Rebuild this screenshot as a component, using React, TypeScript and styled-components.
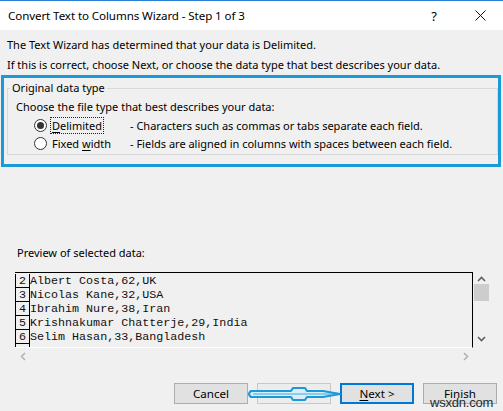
import React from "react";
import styled, { createGlobalStyle } from "styled-components";

const Global = createGlobalStyle`
  html, body { margin: 0; padding: 0; background: #f0f0f0; }
  body { font-family: "Segoe UI", "Noto Sans", "Liberation Sans", sans-serif; }
`;

const Window = styled.div`
  width: 503px;
  height: 411px;
  box-sizing: border-box;
  border-top: 1px solid #2b7fd6;
  background: #f0f0f0;
  display: flex;
  flex-direction: column;
  font-size: 11px;
  color: #000;
  overflow: hidden;
`;

const TitleBar = styled.div`
  height: 29px;
  flex: none;
  background: #fff;
  display: flex;
  align-items: center;
  padding-left: 8px;
`;

const Title = styled.div`
  flex: 1;
  font-size: 11.6px;
  letter-spacing: -0.1px;
`;

const TitleButton = styled.div`
  width: 46px;
  height: 29px;
  display: flex;
  align-items: center;
  justify-content: center;
  font-size: 13px;
`;

const Intro = styled.div`
  margin-top: 5px;
  padding-left: 7px;
  line-height: 20px;
`;

const Highlight = styled.div`
  margin: 0 2px 0 1px;
  border: 3px solid #1a9ad8;
  height: 92px;
  box-sizing: border-box;
`;

const Group = styled.fieldset`
  margin: 3px 0 0 3px;
  padding: 0 0 1px 2px;
  border: 1px solid #d9d9d9;
  height: 74px;
  box-sizing: border-box;
`;

const Legend = styled.legend`
  padding: 0 2px;
  line-height: 14px;
`;

const Prompt = styled.div`
  margin: 3px 0 0 6px;
  line-height: 18px;
`;

const OptionRow = styled.div`
  display: flex;
  align-items: center;
  height: 18px;
  padding-left: 24px;
`;

const Radio = styled.span<{ $checked?: boolean }>`
  width: 11px;
  height: 11px;
  border: 1px solid #333;
  border-radius: 50%;
  background: #fff;
  display: flex;
  align-items: center;
  justify-content: center;
  flex: none;
  &::after {
    content: "";
    width: 7px;
    height: 7px;
    border-radius: 50%;
    background: ${(p) => (p.$checked ? "#333" : "transparent")};
  }
`;

const OptionLabel = styled.span<{ $focused?: boolean }>`
  width: 80px;
  margin-left: 3px;
  span {
    padding: 0 1px;
    border: 1px dotted ${(p) => (p.$focused ? "#222" : "transparent")};
  }
`;

const Underline = styled.u`
  text-decoration: underline;
  text-underline-offset: 2px;
`;

const PreviewLabel = styled.div`
  margin: 78px 0 0 17px;
  line-height: 16px;
`;

const PreviewControl = styled.div`
  margin: 11px 0 0 15px;
  width: 475px;
  display: grid;
  grid-template-columns: 458px 17px;
  grid-template-rows: 76px 16px;
`;

const Viewport = styled.div`
  box-sizing: border-box;
  border-top: 1px solid #000;
  border-right: 1px solid #000;
  border-bottom: 1px solid #fff;
  overflow: hidden;
  padding-top: 1px;
`;

const DataRow = styled.div`
  display: flex;
  height: 14px;
  font-family: "Liberation Mono", "Courier New", monospace;
  font-size: 11.7px;
  line-height: 14px;
  color: #111;
  white-space: pre;
`;

const LineNo = styled.span`
  width: 13px;
  box-sizing: content-box;
  flex: none;
  border-left: 1px solid #000;
  border-right: 1px solid #000;
  border-bottom: 1px solid #000;
  height: 13px;
  line-height: 14px;
  text-align: center;
`;

const VScroll = styled.div`
  display: flex;
  flex-direction: column;
  align-items: center;
  padding-top: 4px;
`;

const Thumb = styled.div`
  width: 15px;
  height: 17px;
  margin-top: 2px;
  background: #cdcdcd;
`;

const HScroll = styled.div`
  display: flex;
  align-items: center;
  justify-content: space-between;
  padding: 0 4px 0 5px;
`;

const Chevron = styled.svg<{ $dim?: boolean }>`
  display: block;
  flex: none;
  stroke: ${(p) => (p.$dim ? "#b4b4b4" : "#606060")};
  fill: none;
  stroke-width: 1.6;
`;

const Spacer = styled.div`
  flex: 1;
`;

const ButtonRow = styled.div`
  position: relative;
  margin: 19px 0 7px;
  padding-right: 6px;
  display: flex;
  justify-content: flex-end;
  gap: 9px;
`;

const Button = styled.div<{ $primary?: boolean; $disabled?: boolean }>`
  width: 74px;
  height: 21px;
  box-sizing: border-box;
  display: flex;
  align-items: center;
  justify-content: center;
  font-size: 11.6px;
  background: ${(p) => (p.$disabled ? "#ececec" : "#e1e1e1")};
  border: ${(p) =>
    p.$primary ? "2px solid #0078d7" : p.$disabled ? "1px solid #c8c8c8" : "1px solid #adadad"};
  color: ${(p) => (p.$disabled ? "#8c8c8c" : "#000")};
`;

const Annotation = styled.svg`
  position: absolute;
  left: 245px;
  top: 2px;
  pointer-events: none;
`;

const Watermark = styled.div`
  position: absolute;
  left: 430px;
  top: 12px;
  font-family: "Liberation Sans", Arial, sans-serif;
  font-size: 13px;
  line-height: 15px;
  color: #2a2a2a;
  letter-spacing: -0.2px;
`;

const rows = [
  ["2", "Albert Costa,62,UK"],
  ["3", "Nicolas Kane,32,USA"],
  ["4", "Ibrahim Nure,38,Iran"],
  ["5", "Krishnakumar Chatterje,29,India"],
  ["6", "Selim Hasan,33,Bangladesh"],
  ["", ""],
];

export default function App() {
  return (
    <>
      <Global />
      <Window>
        <TitleBar>
          <Title>Convert Text to Columns Wizard - Step 1 of 3</Title>
          <TitleButton>?</TitleButton>
          <TitleButton>
            <svg width="11" height="11" viewBox="0 0 11 11">
              <path d="M0.5 0.5 L10.5 10.5 M10.5 0.5 L0.5 10.5" stroke="#111" strokeWidth="1" />
            </svg>
          </TitleButton>
        </TitleBar>

        <Intro>
          <div>The Text Wizard has determined that your data is Delimited.</div>
          <div>If this is correct, choose Next, or choose the data type that best describes your data.</div>
        </Intro>

        <Highlight>
          <Group>
            <Legend>Original data type</Legend>
            <Prompt>Choose the file type that best describes your data:</Prompt>
            <OptionRow>
              <Radio $checked />
              <OptionLabel $focused>
                <span>
                  <Underline>D</Underline>elimited
                </span>
              </OptionLabel>
              <span>- Characters such as commas or tabs separate each field.</span>
            </OptionRow>
            <OptionRow>
              <Radio />
              <OptionLabel>
                <span>
                  Fixed <Underline>w</Underline>idth
                </span>
              </OptionLabel>
              <span>- Fields are aligned in columns with spaces between each field.</span>
            </OptionRow>
          </Group>
        </Highlight>

        <PreviewLabel>Preview of selected data:</PreviewLabel>
        <PreviewControl>
          <Viewport>
            {rows.map(([n, text], i) => (
              <DataRow key={i}>
                <LineNo>{n}</LineNo>
                <span>{text}</span>
              </DataRow>
            ))}
          </Viewport>
          <VScroll>
            <Chevron width="9" height="6" viewBox="0 0 9 6">
              <path d="M1 5 L4.5 1.5 L8 5" />
            </Chevron>
            <Thumb />
            <Spacer />
            <Chevron width="9" height="6" viewBox="0 0 9 6" style={{ marginBottom: 6 }}>
              <path d="M1 1 L4.5 4.5 L8 1" />
            </Chevron>
          </VScroll>
          <HScroll>
            <Chevron $dim width="6" height="9" viewBox="0 0 6 9">
              <path d="M5 1 L1.5 4.5 L5 8" />
            </Chevron>
            <Chevron $dim width="6" height="9" viewBox="0 0 6 9">
              <path d="M1 1 L4.5 4.5 L1 8" />
            </Chevron>
          </HScroll>
          <div />
        </PreviewControl>

        <Spacer />
        <ButtonRow>
          <Button>Cancel</Button>
          <Button $disabled>&lt; Back</Button>
          <Button $primary>
            <span>
              <Underline>N</Underline>ext &gt;
            </span>
          </Button>
          <Button>Finish</Button>
          <Annotation width="100" height="20" viewBox="0 0 100 20">
            <path
              d="M6 6 L46 6 L48 3 L60 3 L62 6 L78 6 L95 9 L78 12 L62 12 L60 15 L48 15 L46 12 L6 12 Q2 9 6 6 Z"
              fill="#d9eef9"
              stroke="#1a9ad8"
              strokeWidth="2.2"
              strokeLinejoin="round"
            />
            <path d="M8 9 L92 9" stroke="#1a9ad8" strokeWidth="0.8" />
          </Annotation>
          <Watermark>wsxdn.com</Watermark>
        </ButtonRow>
      </Window>
    </>
  );
}
